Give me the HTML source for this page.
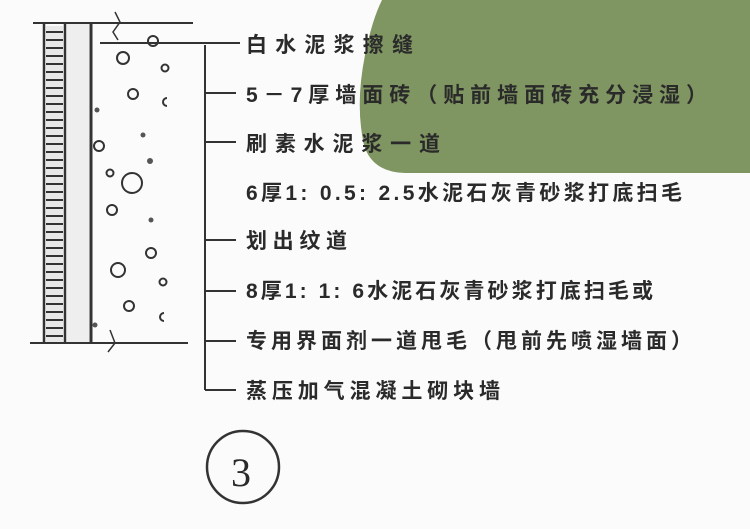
<!DOCTYPE html>
<html><head><meta charset="utf-8"><style>
html,body{margin:0;padding:0;background:#fff;}
svg{display:block}
text{font-family:"Liberation Sans","Noto Sans CJK SC",sans-serif;font-size:21px;fill:#2a2a2a;font-weight:bold}
</style></head><body>
<svg width="750" height="529" viewBox="0 0 750 529" xmlns="http://www.w3.org/2000/svg">
<rect width="750" height="529" fill="#fbfbfb"/>
<g stroke="#333" fill="none">
<line x1="33" y1="23" x2="193" y2="23" stroke-width="2"/>
<line x1="100" y1="43" x2="240" y2="43" stroke-width="2"/>
<line x1="30" y1="343" x2="188" y2="343" stroke-width="2"/>
<line x1="44" y1="23" x2="44" y2="343" stroke-width="2.5"/>
<line x1="65" y1="23" x2="65" y2="343" stroke-width="2.5"/>
<line x1="91" y1="23" x2="91" y2="343" stroke-width="3"/>
<path d="M115,12 L120,22 L113,32 L118,40" stroke-width="1.5"/>
<path d="M110,330 L115,343 L108,352" stroke-width="1.5"/>
<line x1="205" y1="45" x2="205" y2="390" stroke-width="2"/>
<line x1="205" y1="93" x2="236" y2="93" stroke-width="2"/>
<line x1="205" y1="142" x2="236" y2="142" stroke-width="2"/>
<line x1="205" y1="240" x2="236" y2="240" stroke-width="2"/>
<line x1="205" y1="291" x2="236" y2="291" stroke-width="2"/>
<line x1="205" y1="341" x2="236" y2="341" stroke-width="2"/>
<line x1="205" y1="390" x2="236" y2="390" stroke-width="2"/>
<circle cx="243" cy="467" r="36" stroke-width="2.5"/>
<g stroke-width="2">
<circle cx="123" cy="58" r="6"/><circle cx="153" cy="41" r="5"/><circle cx="165" cy="68" r="3.5"/>
<circle cx="133" cy="94" r="5"/><circle cx="99" cy="146" r="5"/><circle cx="110" cy="173" r="3.5"/>
<circle cx="132" cy="183" r="10"/><circle cx="112" cy="210" r="5"/><circle cx="151" cy="253" r="5"/>
<circle cx="118" cy="270" r="7"/><circle cx="163" cy="282" r="3.5"/><circle cx="129" cy="306" r="5"/>
<path d="M167,98 a4,4 0 0,0 0,8"/><path d="M164,313 a4,4 0 0,0 0,8"/>
</g>
</g>
<rect x="46" y="26" width="17" height="316" fill="#e8e8e8"/>
<g stroke="#333" stroke-width="2">
<path d="M46,32H63M46,40H63M46,48H63M46,56H63M46,64H63M46,72H63M46,80H63M46,88H63M46,96H63M46,104H63M46,112H63M46,120H63M46,128H63M46,136H63M46,144H63M46,152H63M46,160H63M46,168H63M46,176H63M46,184H63M46,192H63M46,200H63M46,208H63M46,216H63M46,224H63M46,232H63M46,240H63M46,248H63M46,256H63M46,264H63M46,272H63M46,280H63M46,288H63M46,296H63M46,304H63M46,312H63M46,320H63M46,328H63M46,336H63"/>
</g>
<rect x="67" y="24" width="22" height="318" fill="#e6e6e6" opacity="0.6"/>
<g fill="#555"><circle cx="143" cy="135" r="2.5"/><circle cx="150" cy="161" r="3"/><circle cx="151" cy="220" r="2.5"/><circle cx="97" cy="110" r="2.5"/><circle cx="95" cy="325" r="2.5"/></g>
<path d="M382,0 L750,0 L750,173 L405,173 Q372,172 364,145 Q355,105 365,55 Q372,20 382,0 Z" fill="#7f9562"/>
<g>
<text x="246" y="52" textLength="167">白水泥浆擦缝</text>
<text x="246" y="102" textLength="461">5－7厚墙面砖（贴前墙面砖充分浸湿）</text>
<text x="246" y="151" textLength="194">刷素水泥浆一道</text>
<text x="246" y="200" textLength="436">6厚1: 0.5: 2.5水泥石灰青砂浆打底扫毛</text>
<text x="246" y="248" textLength="101">划出纹道</text>
<text x="246" y="298" textLength="407">8厚1: 1: 6水泥石灰青砂浆打底扫毛或</text>
<text x="246" y="348" textLength="446">专用界面剂一道甩毛（甩前先喷湿墙面）</text>
<text x="246" y="398" textLength="254">蒸压加气混凝土砌块墙</text>
<text x="231" y="486" style="font-size:40px;font-weight:normal;font-family:'Liberation Serif',serif">3</text>
</g>
</svg>
</body></html>
